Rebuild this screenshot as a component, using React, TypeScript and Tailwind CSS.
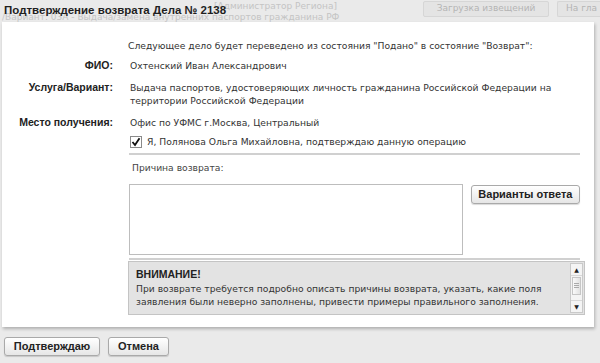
import React from 'react';

const body = "font-['DejaVu_Sans',Verdana,sans-serif]";
const bold = "font-['Liberation_Sans',Tahoma,Arial,sans-serif] font-bold";

const Row = ({ label, children }: { label: string; children: React.ReactNode }) => (
  <div className="flex">
    <div className={`w-[111px] shrink-0 text-right whitespace-nowrap text-[10.5px] leading-[13px] text-[#222] ${bold}`}>{label}</div>
    <div className="ml-[17px] text-[9.2px] leading-[13px] text-[#333] w-[440px]">{children}</div>
  </div>
);

const Btn = ({ children, className = '' }: { children: React.ReactNode; className?: string }) => (
  <button
    className={`h-[19px] rounded-[3px] border border-[#a9a9a9] bg-gradient-to-b from-white to-[#e6e6e6] text-[11px] text-[#222] shadow-[0_1px_1px_rgba(0,0,0,0.15)] ${bold} ${className}`}
  >
    {children}
  </button>
);

export default function App() {
  return (
    <div className={`w-[600px] h-[363px] overflow-hidden bg-[#eaeaea] flex flex-col ${body}`}>
      {/* шапка окна поверх страницы */}
      <div className="relative h-[22px] shrink-0">
        <div className="absolute inset-0 text-[#c4c4c4] text-[9px] leading-[11px] pl-[2px] pt-[1px] whitespace-nowrap">
          <div className="pl-[212px]">[Администратор Региона]</div>
          <div>/Вариант: 03А - Выдача/замена внутренних паспортов гражданина РФ</div>
        </div>
        <div className="absolute left-[423px] top-[1px] h-[16px] w-[126px] rounded-[2px] border border-[#d6d6d6] bg-[#e4e4e4] text-[9px] text-[#b4b4b4] flex items-center justify-center whitespace-nowrap">
          Загрузка извещений
        </div>
        <div className="absolute left-[557px] top-[1px] h-[16px] w-[43px] rounded-l-[2px] border border-r-0 border-[#d6d6d6] bg-[#e4e4e4] text-[9px] text-[#b4b4b4] flex items-center pl-[8px] whitespace-nowrap overflow-hidden">
          На гла
        </div>
        <div className={`relative pl-[4px] pt-[4px] text-[11.5px] leading-[13px] text-[#1f1f1f] ${bold}`}>
          Подтверждение возврата Дела № 2138
        </div>
      </div>

      {/* белая панель */}
      <div className="ml-[2px] w-[592px] h-[305px] shrink-0 bg-white shadow-[1px_2px_3px_rgba(0,0,0,0.25)] pt-[17px]">
        <div className="pl-[126px] text-[9.2px] leading-[13px] text-[#333]">
          Следующее дело будет переведено из состояния "Подано" в состояние "Возврат":
        </div>
        <div className="mt-[7px] flex flex-col gap-[9px]">
          <Row label="ФИО:">Охтенский Иван Александрович</Row>
          <Row label="Услуга/Вариант:">
            Выдача паспортов, удостоверяющих личность гражданина Российской Федерации на территории Российской Федерации
          </Row>
          <Row label="Место получения:">Офис по УФМС г.Москва, Центральный</Row>
        </div>
        <div className="mt-[6px] ml-[128px] flex items-center gap-[5px] text-[9.2px] text-[#333]">
          <span className="w-[12px] h-[12px] border border-[#8a8a8a] bg-white flex items-center justify-center">
            <svg width="10" height="10" viewBox="0 0 10 10">
              <path d="M1.5 5 L4 8 L8.5 1.2" fill="none" stroke="#111" strokeWidth="1.8" />
            </svg>
          </span>
          <span>Я, Полянова Ольга Михайловна, подтверждаю данную операцию</span>
        </div>

        <div className="mt-[4px] ml-[127px] w-[451px] border-t-[2px] border-b-[2px] border-[#d0d0d0] pt-[6px] pb-[3px]">
          <div className="pl-[3px] text-[9.2px] leading-[13px] text-[#444]">Причина возврата:</div>
          <div className="mt-[10px] flex items-start">
            <textarea className="w-[336px] h-[71px] border border-[#bdbdbd] resize-none outline-none" />
            <Btn className="ml-[8px] w-[110px] h-[19px] mt-[1px]">Варианты ответа</Btn>
          </div>
        </div>

        <div className="ml-[126px] mt-[1px] w-[457px] h-[54px] border border-[#c4c4c4] bg-[#e3e3e3] flex">
          <div className="flex-1 pl-[7px] pt-[6px] text-[9.2px] leading-[13px] text-[#333]">
            <div className={`text-[10.5px] leading-[12px] text-[#222] ${bold}`}>ВНИМАНИЕ!</div>
            <div className="mt-[2px]">
              При возврате требуется подробно описать причины возврата, указать, какие поля заявления были неверно заполнены, привести примеры правильного заполнения.
            </div>
          </div>
          <div className="w-[13px] my-[1px] mr-[1px] bg-[#f4f4f4] border border-[#c9c9c9] flex flex-col">
            <div className="h-[12px] flex items-center justify-center text-[6px] text-[#222] border-b border-[#d8d8d8]">▲</div>
            <div className="h-[18px] mx-[1px] mt-[1px] bg-gradient-to-r from-[#fafafa] to-[#e2e2e2] border border-[#c6c6c6] flex flex-col items-center justify-center gap-[1px]">
              <span className="block w-[5px] h-px bg-[#aaa]" />
              <span className="block w-[5px] h-px bg-[#aaa]" />
              <span className="block w-[5px] h-px bg-[#aaa]" />
            </div>
            <div className="flex-1" />
            <div className="h-[12px] flex items-center justify-center text-[6px] text-[#222] border-t border-[#d8d8d8]">▼</div>
          </div>
        </div>
      </div>

      {/* кнопки */}
      <div className="flex gap-[8px] pl-[4px] pt-[10px]">
        <Btn className="w-[96px]">Подтверждаю</Btn>
        <Btn className="w-[61px]">Отмена</Btn>
      </div>
    </div>
  );
}
